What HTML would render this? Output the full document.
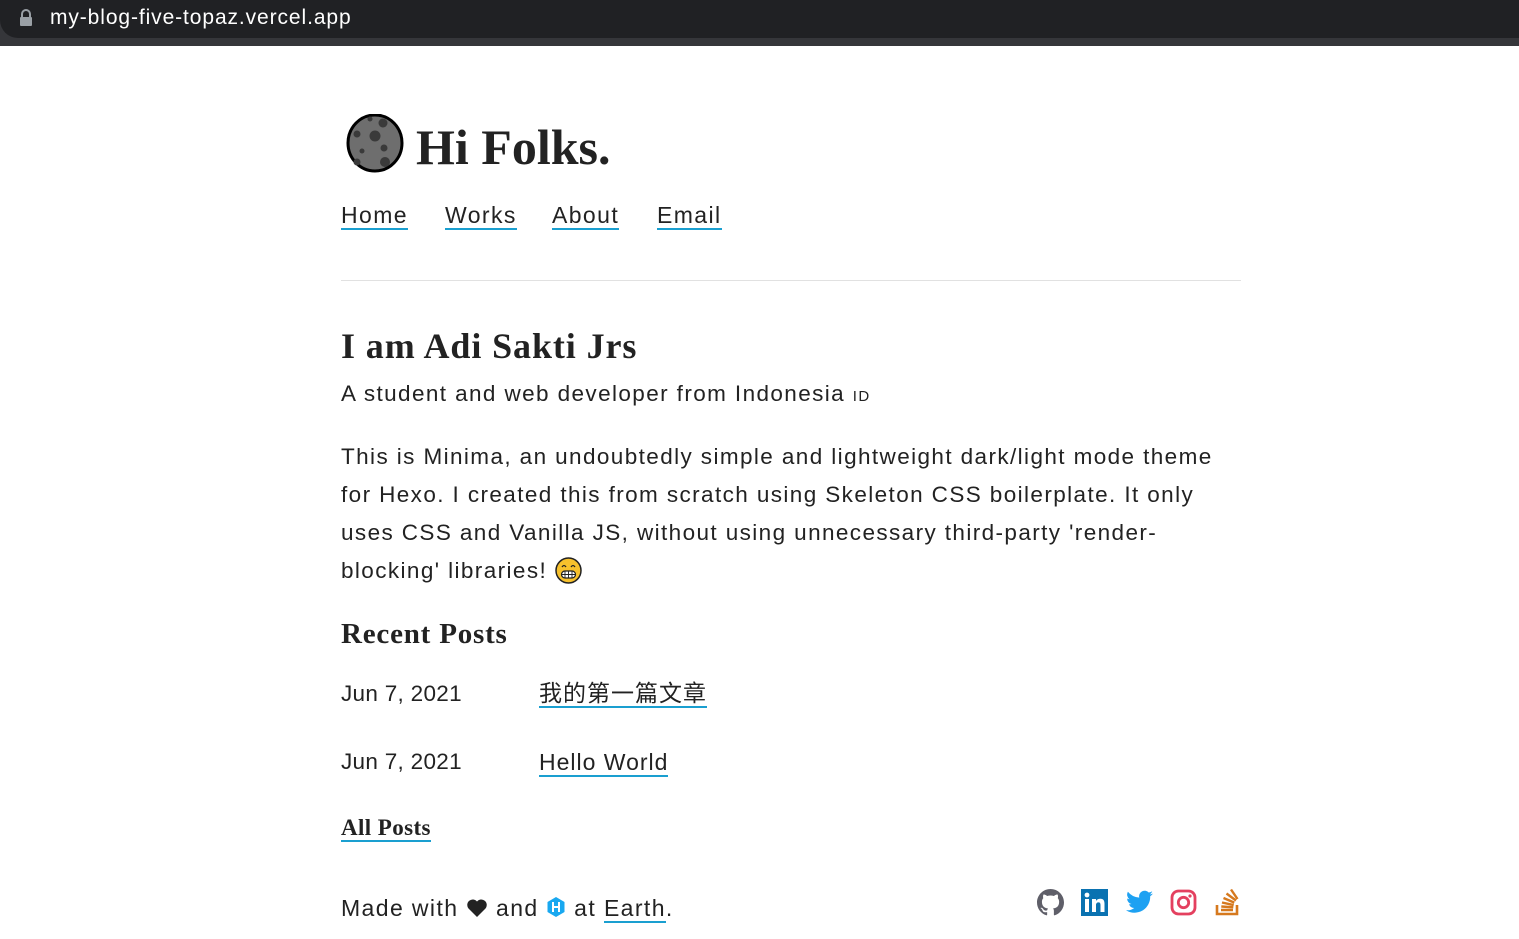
<!DOCTYPE html>
<html><head><meta charset="utf-8"><style>
*{margin:0;padding:0;box-sizing:border-box}
body{width:1519px;height:939px;background:#fff;position:relative;overflow:hidden;font-family:"Liberation Sans","Noto Sans CJK SC",sans-serif;color:#222}
.bar{position:absolute;left:0;top:0;width:1519px;height:46px;background:#35363a}
.url{position:absolute;left:0;top:0;width:1519px;height:38px;background:#202124;border-radius:0 0 0 18px}
.url span{position:absolute;left:50px;top:6px;color:#fff;font-size:21px;letter-spacing:0.9px}
.a{position:absolute;white-space:nowrap;line-height:1}
.s{font-family:"Liberation Serif","Noto Serif CJK SC",serif;font-weight:bold;color:#222}
a{color:#222;text-decoration:none;border-bottom:2px solid #1a9fd0}
.t{font-size:23px;letter-spacing:1.4px}
.b{letter-spacing:1.4px}
</style></head><body>
<div class="bar"></div>
<div class="url"><svg style="position:absolute;left:19px;top:9px" width="14" height="18" viewBox="0 0 14 18"><path d="M3 8V5a4 4 0 0 1 8 0v3" fill="none" stroke="#9aa0a6" stroke-width="2"/><rect x="1" y="8" width="12" height="9" rx="1" fill="#9aa0a6"/></svg><span>my-blog-five-topaz.vercel.app</span></div>

<svg class="a" style="left:345px;top:114px" width="60" height="60" viewBox="0 0 60 60"><ellipse cx="30" cy="29" rx="27" ry="28" fill="#6e6e6e" stroke="#000" stroke-width="3"/><circle cx="30" cy="22" r="5.5" fill="#3a3a3a"/><circle cx="38" cy="9" r="4.5" fill="#3a3a3a"/><circle cx="12" cy="20" r="3.5" fill="#3a3a3a"/><circle cx="39" cy="34" r="3.5" fill="#3a3a3a"/><circle cx="17" cy="37" r="2.5" fill="#3a3a3a"/><circle cx="40" cy="48" r="5" fill="#3a3a3a"/><circle cx="12" cy="48" r="3.5" fill="#3a3a3a"/><circle cx="25" cy="5" r="2.5" fill="#3a3a3a"/></svg>
<div class="a s" style="left:416px;top:122px;font-size:50px">Hi Folks.</div>

<div class="a t" style="left:341px;top:204px"><a href="#">Home</a></div>
<div class="a t" style="left:445px;top:204px"><a href="#">Works</a></div>
<div class="a t" style="left:552px;top:204px"><a href="#">About</a></div>
<div class="a t" style="left:657px;top:204px"><a href="#">Email</a></div>

<div class="a" style="left:341px;top:280px;width:900px;height:1px;background:#e1e1e1"></div>

<div class="a s" style="left:341px;top:328px;font-size:36px;letter-spacing:0.9px">I am Adi Sakti Jrs</div>
<div class="a b" style="left:341px;top:383px;font-size:22.5px">A student and web developer from Indonesia <span style="font-size:15px">ID</span></div>
<div class="a b" style="left:341px;top:438px;font-size:22.5px;line-height:38px;white-space:nowrap;width:900px">This is Minima, an undoubtedly simple and lightweight dark/light mode theme<br>for Hexo. I created this from scratch using Skeleton CSS boilerplate. It only<br>uses CSS and Vanilla JS, without using unnecessary third-party 'render-<br>blocking' libraries! <svg width="27" height="27" viewBox="0 0 27 27" style="vertical-align:-6px"><circle cx="13.5" cy="13.5" r="12.5" fill="#f7c12c" stroke="#222" stroke-width="1.5"/><path d="M7 10q2-3 4 0M16 10q2-3 4 0" fill="none" stroke="#222" stroke-width="1.3"/><rect x="6.5" y="14" width="14" height="7" rx="3.5" fill="#fff" stroke="#222" stroke-width="1.2"/><path d="M6.5 17.5h14M10 14v7M13.5 14v7M17 14v7" stroke="#222" stroke-width="0.9"/></svg></div>

<div class="a s" style="left:341px;top:620px;font-size:29px;letter-spacing:0.8px">Recent Posts</div>
<div class="a" style="left:341px;top:683px;font-size:22.5px;letter-spacing:0.3px">Jun 7, 2021</div>
<div class="a" style="left:539px;top:682px;font-size:23px;letter-spacing:1px"><a href="#">我的第一篇文章</a></div>
<div class="a" style="left:341px;top:751px;font-size:22.5px;letter-spacing:0.3px">Jun 7, 2021</div>
<div class="a" style="left:539px;top:751px;font-size:23px;letter-spacing:1px"><a href="#">Hello World</a></div>
<div class="a s" style="left:341px;top:816px;font-size:23px;letter-spacing:0.4px"><a href="#">All Posts</a></div>

<div class="a b" style="left:341px;top:896px;font-size:23px">Made with <svg width="22" height="20" viewBox="0 0 22 20" style="vertical-align:-2px"><path d="M11 19L2.5 10.5A5.5 5.5 0 0 1 11 3.5a5.5 5.5 0 0 1 8.5 7z" fill="#222"/></svg> and <svg width="20" height="22" viewBox="0 0 20 22" style="vertical-align:-2px"><path d="M10 1l8.5 5v10L10 21 1.5 16V6z" fill="#19a8f0"/><path d="M7 6v10M13 6v10M7 11h6" stroke="#fff" stroke-width="2"/></svg> at <a href="#">Earth</a>.</div>

<svg class="a" style="left:1037px;top:889px" width="27" height="27" viewBox="0 0 16 16"><path fill="#5f5f69" d="M8 0C3.58 0 0 3.58 0 8c0 3.54 2.290 6.53 5.47 7.59.4.07.55-.17.55-.38 0-.19-.01-.82-.01-1.490-2.01.37-2.53-.49-2.69-.94-.09-.23-.48-.94-.82-1.13-.28-.15-.68-.52-.01-.53.63-.01 1.08.58 1.23.82.72 1.21 1.87.87 2.33.66.07-.52.28-.87.51-1.07-1.78-.2-3.64-.89-3.64-3.95 0-.87.31-1.59.82-2.15-.08-.2-.36-1.02.08-2.12 0 0 .67-.21 2.2.82.64-.18 1.32-.27 2-.27.68 0 1.36.09 2 .27 1.53-1.04 2.2-.82 2.2-.82.44 1.1.16 1.92.08 2.12.51.56.82 1.27.82 2.15 0 3.07-1.87 3.75-3.65 3.95.29.25.54.73.54 1.48 0 1.07-.01 1.93-.01 2.2 0 .21.15.46.55.38A8.013 8.013 0 0016 8c0-4.42-3.58-8-8-8z"/></svg>
<svg class="a" style="left:1081px;top:889px" width="27" height="27" viewBox="0 0 27 27"><rect width="27" height="27" fill="#0a72b1"/><rect x="4" y="10" width="4" height="13" fill="#fff"/><circle cx="6" cy="6" r="2.4" fill="#fff"/><path d="M11 10h4v2c1-2 3-2.3 4.5-2.3 3 0 4 2 4 5V23h-4v-7c0-1.6-.5-2.6-2-2.6s-2.5 1-2.5 2.6v7h-4z" fill="#fff"/></svg>
<svg class="a" style="left:1126px;top:890px" width="27" height="24" viewBox="0 0 24 20"><path fill="#1da1f2" d="M24 2.4a9.8 9.8 0 0 1-2.8.8A4.9 4.9 0 0 0 23.3.4a9.9 9.9 0 0 1-3.1 1.2 4.9 4.9 0 0 0-8.4 4.5A14 14 0 0 1 1.7.9a4.9 4.9 0 0 0 1.5 6.6 4.9 4.9 0 0 1-2.2-.6v.1a4.9 4.9 0 0 0 3.9 4.8 4.9 4.9 0 0 1-2.2.1 4.9 4.9 0 0 0 4.6 3.4A9.9 9.9 0 0 1 0 17.3 14 14 0 0 0 7.5 19.5c9 0 14-7.5 14-14v-.6A10 10 0 0 0 24 2.4z"/></svg>
<svg class="a" style="left:1170px;top:889px" width="27" height="27" viewBox="0 0 27 27"><rect x="2" y="2" width="23" height="23" rx="6.5" fill="none" stroke="#e4405f" stroke-width="2.8"/><circle cx="13.5" cy="13.5" r="5.2" fill="none" stroke="#e4405f" stroke-width="2.8"/><circle cx="20" cy="7" r="1.6" fill="#e4405f"/></svg>
<svg class="a" style="left:1214px;top:887px" width="27" height="29" viewBox="0 0 27 29"><path d="M3 18v9h20v-9" fill="none" stroke="#d6791e" stroke-width="2.6"/><path d="M7 23h12M7.3 19.5l12 .8M8 15.5l11.7 2.6M9.5 11l10.8 4.6M12.5 6.5l9.5 7M17 2.5l6.5 9.5" stroke="#d6791e" stroke-width="2.4"/></svg>
</body></html>
